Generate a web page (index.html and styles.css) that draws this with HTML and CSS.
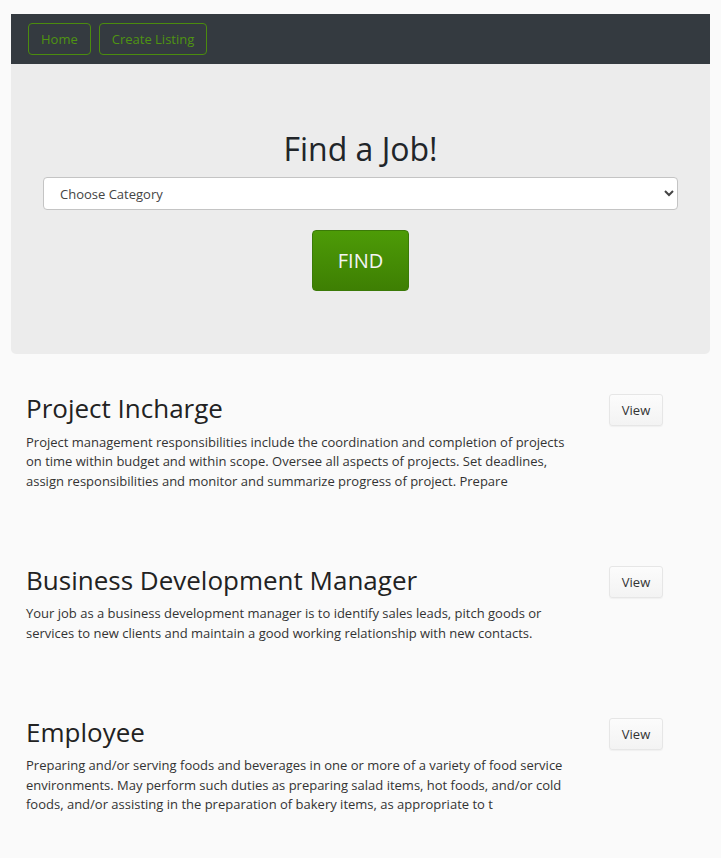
FILE: index.html
```html
<!DOCTYPE html>
<html>
<head>
<meta charset="utf-8">
<link rel="stylesheet" href="styles.css">
</head>
<body>
<div class="page">
  <nav class="navbar">
    <a class="nav-btn" href="#">Home</a>
    <a class="nav-btn" href="#">Create Listing</a>
  </nav>
  <section class="jumbo">
    <h1 class="jumbo-title">Find a Job!</h1>
    <select class="category">
      <option>Choose Category</option>
    </select>
    <div class="find-wrap"><button class="find-btn">FIND</button></div>
  </section>
  <main class="listings">
    <article class="job">
      <div class="job-text">
        <h2 class="job-title">Project Incharge</h2>
        <p class="job-desc">Project management responsibilities include the coordination and completion of projects on time within budget and within scope. Oversee all aspects of projects. Set deadlines, assign responsibilities and monitor and summarize progress of project. Prepare</p>
      </div>
      <a class="view-btn" href="#">View</a>
    </article>
    <article class="job">
      <div class="job-text">
        <h2 class="job-title">Business Development Manager</h2>
        <p class="job-desc">Your job as a business development manager is to identify sales leads, pitch goods or services to new clients and maintain a good working relationship with new contacts.</p>
      </div>
      <a class="view-btn" href="#">View</a>
    </article>
    <article class="job">
      <div class="job-text">
        <h2 class="job-title">Employee</h2>
        <p class="job-desc">Preparing and/or serving foods and beverages in one or more of a variety of food service environments. May perform such duties as preparing salad items, hot foods, and/or cold foods, and/or assisting in the preparation of bakery items, as appropriate to t</p>
      </div>
      <a class="view-btn" href="#">View</a>
    </article>
  </main>
</div>
</body>
</html>
```

FILE: styles.css
```css
* { box-sizing: border-box; }
html, body { margin: 0; padding: 0; }
body {
  background: #fafafa;
  font-family: "Open Sans", "Noto Sans", sans-serif;
  color: #222;
}
.page {
  padding: 14px 11px 0 11px;
}
.navbar {
  background: #343a40;
  height: 50px;
  padding: 9px 17px;
  display: flex;
  gap: 8px;
  align-items: center;
}
.nav-btn {
  display: inline-flex;
  align-items: center;
  height: 32px;
  padding: 0 12px;
  border: 1px solid #4b8c0e;
  border-radius: 4px;
  color: #4f9412;
  font-size: 13px;
  text-decoration: none;
}
.jumbo {
  background: #ececec;
  padding: 66px 32px 63px;
  border-radius: 0 0 5px 5px;
}
.jumbo-title {
  margin: 0 0 9px;
  text-align: center;
  font-weight: 400;
  font-size: 32px;
  line-height: 1.2;
  color: #212529;
}
.category {
  display: block;
  width: 100%;
  height: 33px;
  padding: 0 12px;
  font-family: "Open Sans", sans-serif;
  font-size: 13px;
  color: #444;
  background: #fff;
  border: 1px solid #c4c4c4;
  border-radius: 4px;
}
.find-wrap {
  display: flex;
  justify-content: center;
  margin-top: 20px;
}
.find-btn {
  width: 97px;
  height: 61px;
  border: 1px solid #3b7a08;
  border-radius: 4px;
  background: linear-gradient(#4d9b07, #3e7f03);
  color: #f4f4f4;
  font-family: "Open Sans", sans-serif;
  font-size: 20px;
}
.listings {
  padding: 39px 15px 0;
}
.job {
  display: flex;
  justify-content: space-between;
  align-items: flex-start;
  padding-bottom: 74px;
  padding-right: 32px;
}
.job-text {
  width: 548px;
}
.job-title {
  margin: 0 0 8px;
  font-weight: 400;
  font-size: 26px;
  line-height: 1.2;
  color: #222;
}
.job-desc {
  margin: 0;
  font-size: 13px;
  line-height: 1.5;
  color: #333;
}
.view-btn {
  margin-top: 1px;
  display: inline-flex;
  align-items: center;
  justify-content: center;
  width: 54px;
  height: 32px;
  font-size: 13px;
  color: #333;
  text-decoration: none;
  background: linear-gradient(#fcfcfc, #f3f3f3);
  border: 1px solid #e6e6e6;
  border-radius: 3px;
  box-shadow: 0 1px 1px rgba(0,0,0,0.04);
}
```
